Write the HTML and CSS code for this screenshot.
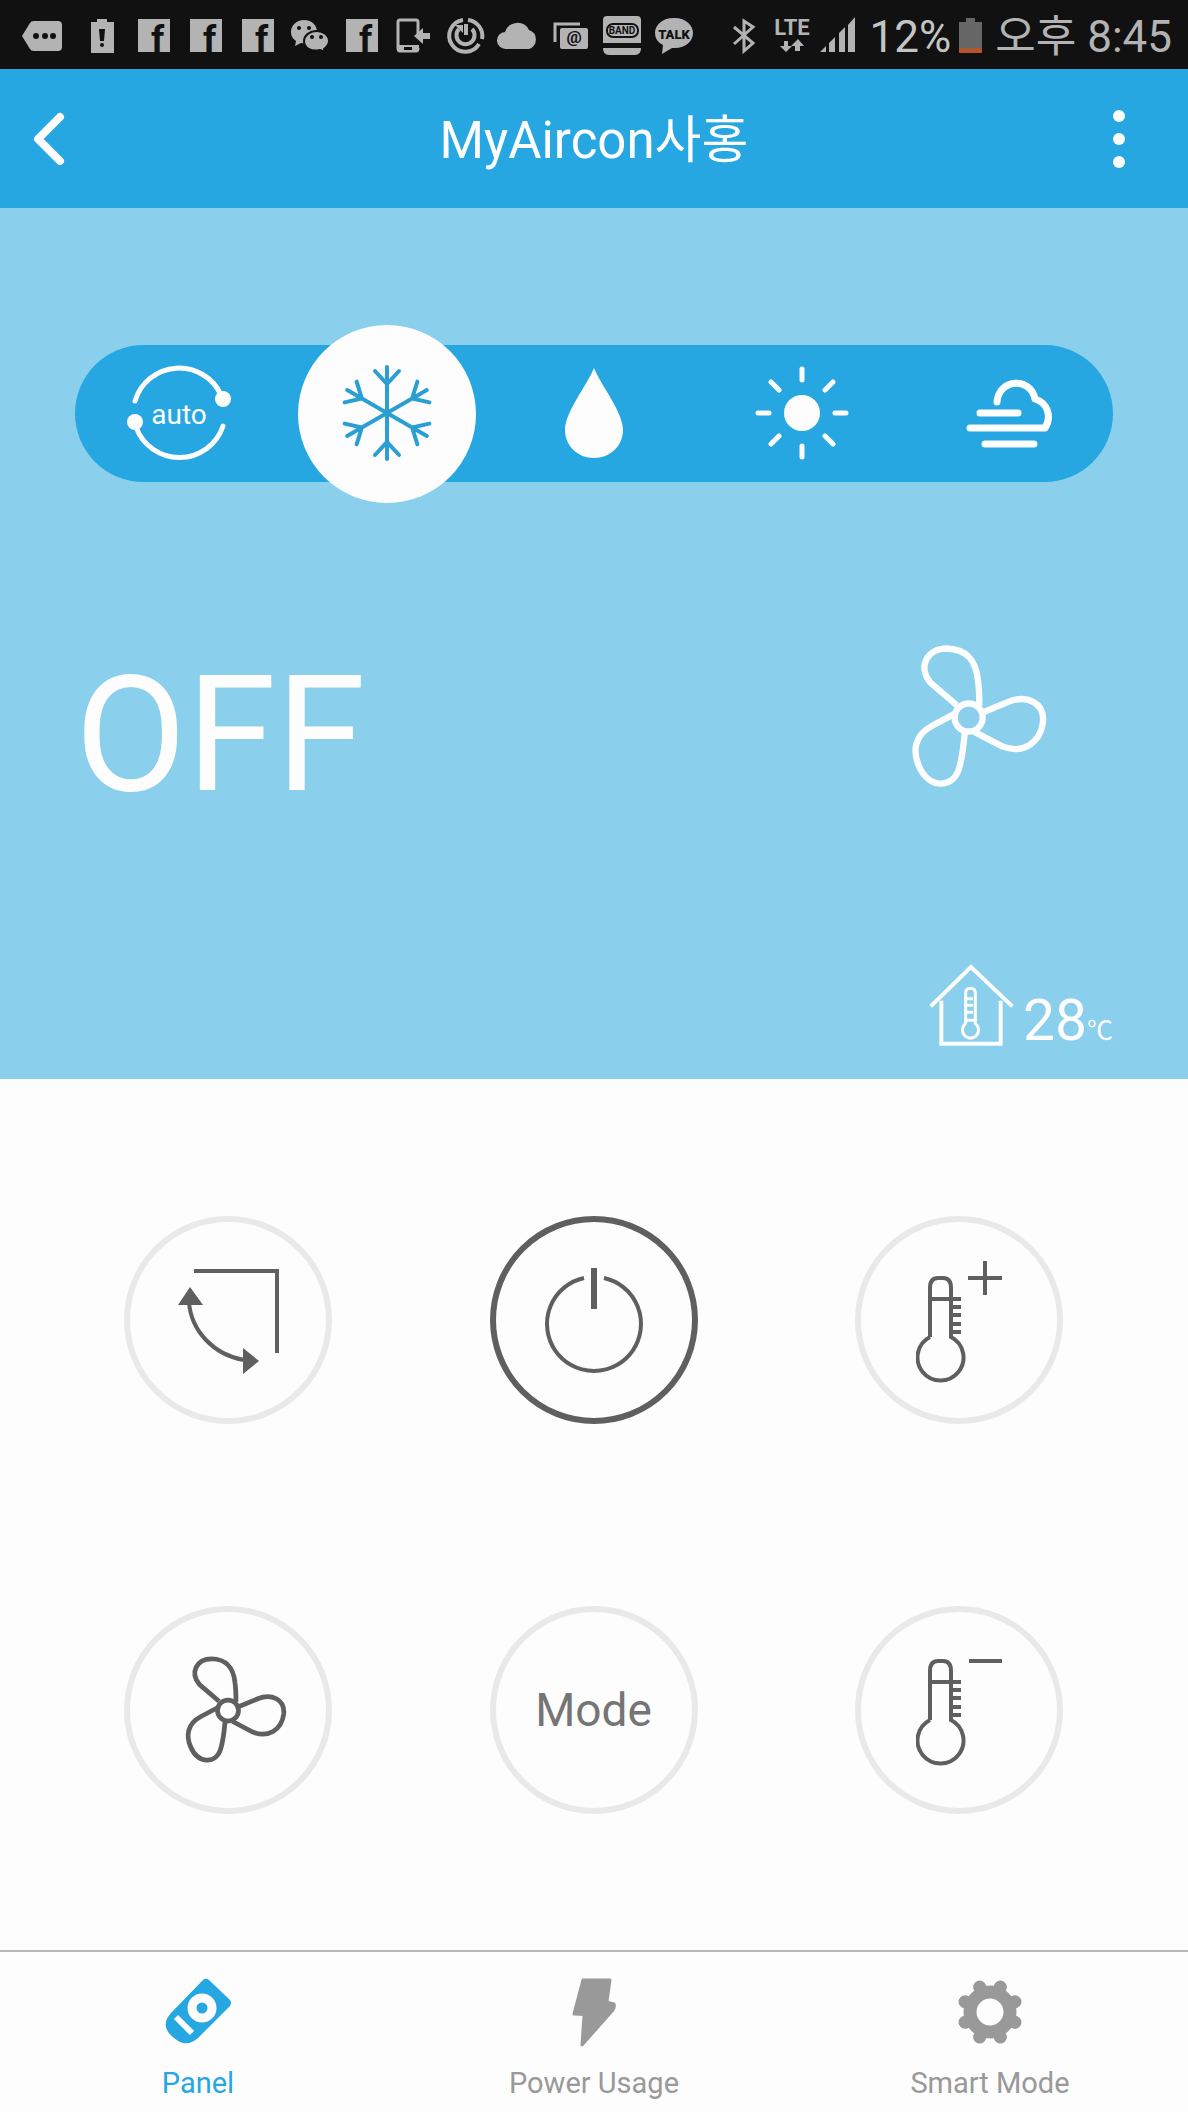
FILE: index.html
```html
<!DOCTYPE html>
<html lang="ko">
<head>
  <meta charset="UTF-8">
  <meta name="viewport" content="width=device-width, initial-scale=1.0">
  <title>MyAircon</title>
  <link rel="stylesheet" href="styles.css">
</head>
<body>

<!-- shared shapes -->
<svg class="defs" aria-hidden="true">
  <symbol id="fan" viewBox="90 65 420 440">
    <g fill="none" stroke="currentColor" stroke-width="19">
      <path d="M230 254 L152 187 C112 140 140 84 200 84 C262 86 288 120 294 180 Q298 210 298 256"/>
      <path d="M308 276 L385 244 C440 222 494 246 489 305 C480 370 425 402 365 377 L283 334"/>
      <path d="M222 281 L158 315 C100 345 99 395 116 435 C145 505 215 505 235 450 C247 415 250 385 254 338"/>
      <circle cx="266" cy="291" r="42"/>
    </g>
  </symbol>
  <symbol id="thermometer" viewBox="0 0 70 120">
    <g fill="none" stroke="currentColor" stroke-width="4">
      <path d="M14 63 V14 Q14 4 22 4 H27 Q35 4 35 14 V63 A23 23 0 1 1 14 63"/>
      <path d="M14 25 H45 M35 33 H45 M35 41 H45 M35 50 H45 M35 58 H45"/>
    </g>
  </symbol>
</svg>

<div class="status-bar">
  <div class="notifications">
    <svg class="wide" viewBox="0 0 76 40">
      <path d="M34 6 H58 Q62 6 62 10 V32 Q62 36 58 36 H34 Q31 36 30 34 L22 21 L30 8 Q31 6 34 6 Z"/>
      <g class="cut"><circle cx="36" cy="21" r="3"/><circle cx="45" cy="21" r="3"/><circle cx="53" cy="21" r="3"/></g>
    </svg>
    <svg viewBox="0 0 52 40">
      <path d="M15 7 H21 V4 H31 V7 H38 V38 H15 Z"/>
      <path class="cut" d="M23 14 H29 L28 26 H24 Z"/><circle class="cut" cx="26" cy="30" r="2"/>
    </svg>
    <svg viewBox="0 0 52 40"><path d="M10 4 H42 V37 H10 Z"/><text class="cut" x="23" y="37" font-size="37" font-weight="700">f</text></svg>
    <svg viewBox="0 0 52 40"><path d="M10 4 H42 V37 H10 Z"/><text class="cut" x="23" y="37" font-size="37" font-weight="700">f</text></svg>
    <svg viewBox="0 0 52 40"><path d="M10 4 H42 V37 H10 Z"/><text class="cut" x="23" y="37" font-size="37" font-weight="700">f</text></svg>
    <svg viewBox="0 0 52 40">
      <path d="M20 5 C12 5 7 11 7 17 Q7 23 12 26 L11 31 L17 28 Q32 30 33 17 C33 10 28 5 20 5 Z"/>
      <path class="gap" d="M33 16 C25 16 20 21 20 26 C20 33 27 37 36 35 L41 37 L40 34 Q45 30 45 26 C45 20 39 16 33 16 Z"/>
      <g class="cut"><circle cx="15" cy="13" r="2"/><circle cx="25" cy="13" r="2"/><circle cx="28" cy="22" r="2"/><circle cx="37" cy="22" r="2"/></g>
    </svg>
    <svg viewBox="0 0 52 40"><path d="M10 4 H42 V37 H10 Z"/><text class="cut" x="23" y="37" font-size="37" font-weight="700">f</text></svg>
    <svg viewBox="0 0 52 40">
      <path class="line" d="M30 19 V7 Q30 5 28 5 H12 Q10 5 10 7 V33 Q10 36 12 36 H28 Q30 36 30 33"/>
      <path d="M10 30 H31 V36 H10 Z M42 18 V24 H35 V29 L26 21 L35 13 V18 Z"/><path class="cut" d="M16 32 H24 V35 H16 Z"/>
    </svg>
    <svg viewBox="0 0 52 40">
      <path class="line thick" d="M23 5 A16 16 0 1 0 39 29 M28 5 A16 16 0 0 1 42 24"/>
      <path class="line thick" d="M19 14 A9 9 0 1 0 32 14 M26 9 V20"/><path d="M15 10 H23 V18 Z"/>
    </svg>
    <svg viewBox="0 0 52 40">
      <path d="M14 34 A8 8 0 0 1 13 17 A13 13 0 0 1 37 15 A10 10 0 0 1 37 34 Z"/>
    </svg>
    <svg viewBox="0 0 52 40">
      <path class="line" d="M11 27 V9 H36"/>
      <rect x="16" y="13" width="28" height="21" rx="2"/>
      <text class="cut" x="30" y="28" text-anchor="middle" font-size="17" font-weight="700">@</text>
    </svg>
    <svg viewBox="0 0 52 40">
      <path d="M7 28 V5 Q7 1 11 1 H41 Q45 1 45 5 V28 Z M7 33 H45 Q45 40 39 40 H13 Q7 40 7 33 Z"/>
      <rect class="cut-line" x="11" y="9" width="31" height="13" rx="6"/>
      <text class="cut" x="26" y="19" text-anchor="middle" font-size="10" font-weight="700">BAND</text>
    </svg>
    <svg viewBox="0 0 52 40">
      <path d="M26 3 C13 3 7 11 7 18 Q7 26 15 30 L14 39 L24 33 C38 34 45 26 45 18 C45 11 39 3 26 3 Z"/>
      <text class="cut" x="26" y="24" text-anchor="middle" font-size="13" font-weight="900">TALK</text>
    </svg>
  </div>
  <div class="system">
    <svg class="bluetooth" viewBox="0 0 24 40"><path class="line" d="M2 12 L21 28 L12 36 V6 L21 12 L2 29"/></svg>
    <svg class="lte" viewBox="0 0 40 40">
      <text x="20" y="20" text-anchor="middle" font-size="22" font-weight="700">LTE</text>
      <path d="M12 26 H16 V31 H20 L14 37 L8 31 H12 Z M23 36 V31 H19 L26 24 L32 31 H28 V36 Z"/>
    </svg>
    <svg class="signal" viewBox="0 0 36 40"><path d="M0 37 L6 31 V37 Z M9 37 V28 L15 22 V37 Z M19 37 V18 L25 12 V37 Z M28 37 V10 L35 2 V37 Z"/></svg>
    <span class="percent">12%</span>
    <svg class="battery" viewBox="0 0 24 40"><path fill="#666" d="M0 7 H7 V3 H16 V7 H23 V33 H0 Z"/><path fill="#b25430" d="M0 33 H23 V38 H0 Z"/></svg>
    <time>오후 8:45</time>
  </div>
</div>

<header class="app-bar">
  <button type="button" class="icon-button" aria-label="Back">
    <svg viewBox="0 0 40 60"><path d="M30 8 L8 30 L30 52" fill="none" stroke="currentColor" stroke-width="8" stroke-linecap="round" stroke-linejoin="round"/></svg>
  </button>
  <h1>MyAircon사홍</h1>
  <button type="button" class="icon-button" aria-label="More options">
    <svg viewBox="0 0 40 60"><g fill="currentColor"><circle cx="19" cy="7" r="6"/><circle cx="19" cy="30" r="6"/><circle cx="19" cy="53" r="6"/></g></svg>
  </button>
</header>

<main>
  <section class="display">
    <div class="modes">
      <button type="button" aria-label="Auto">
        <svg viewBox="-54 -53 108 108">
          <g fill="none" stroke="currentColor" stroke-width="5" stroke-linecap="round">
            <path d="M-44 -12 A46 46 0 0 1 42 -18"/>
            <path d="M44 13 A46 46 0 0 1 -43 14"/>
          </g>
          <circle cx="44" cy="-14" r="8" fill="currentColor"/>
          <circle cx="-44" cy="9" r="8" fill="currentColor"/>
          <text x="0" y="11" text-anchor="middle" font-size="28" fill="currentColor">auto</text>
        </svg>
      </button>
      <button type="button" class="active" aria-label="Cool" aria-pressed="true">
        <svg viewBox="-54 -53 108 108">
          <g fill="none" stroke="currentColor" stroke-width="4" stroke-linecap="round">
            <path id="arm" d="M0 0 V-46 M-12 -42 L0 -29 L12 -42"/>
            <use href="#arm" transform="rotate(60)"/>
            <use href="#arm" transform="rotate(120)"/>
            <use href="#arm" transform="rotate(180)"/>
            <use href="#arm" transform="rotate(240)"/>
            <use href="#arm" transform="rotate(300)"/>
          </g>
        </svg>
      </button>
      <button type="button" aria-label="Dry">
        <svg viewBox="-54 -53 108 108"><path fill="currentColor" d="M0 -45 C8 -26 29 -1 29 17 C29 33 16 45 0 45 C-16 45 -29 33 -29 17 C-29 -1 -8 -26 0 -45 Z"/></svg>
      </button>
      <button type="button" aria-label="Heat">
        <svg viewBox="-54 -53 108 108">
          <circle r="18" fill="currentColor"/>
          <path d="M0 -44 V-33 M0 44 V33 M-44 0 H-33 M44 0 H33 M-31 -31 L-23 -23 M31 -31 L23 -23 M-31 31 L-23 23 M31 31 L23 23" stroke="currentColor" stroke-width="5" stroke-linecap="round"/>
        </svg>
      </button>
      <button type="button" aria-label="Fan only">
        <svg viewBox="-54 -54 108 108">
          <path d="M-12 -12 C-10 -36 22 -37 26 -15 C39 -11 43 3 36 14 H-39 M-29 -1 H9 M-24 30 H25" fill="none" stroke="currentColor" stroke-width="7" stroke-linecap="round" stroke-linejoin="round"/>
        </svg>
      </button>
    </div>

    <div class="state">
      <span class="state-text">OFF</span>
      <svg class="state-fan"><use href="#fan"/></svg>
    </div>

    <div class="indoor">
      <svg viewBox="140 1030 270 255">
        <g fill="none" stroke="currentColor" stroke-width="12">
          <path d="M151 1160 L272 1042 L396 1160"/>
          <path d="M183 1143 V1272 H361 V1143"/>
          <path d="M256 1212 V1120 Q256 1106 270 1106 Q285 1106 285 1120 V1212 A24 24 0 1 1 256 1212 M256 1137 H278 M256 1157 H278 M256 1178 H278 M256 1202 H285" stroke-width="9"/>
        </g>
      </svg>
      <span class="temperature">28<small>℃</small></span>
    </div>
  </section>

  <section class="controls">
    <button type="button" aria-label="Swing">
      <svg viewBox="6 6 196 196">
        <path d="M70 55 H153 V137 M65 86 C67 115 90 139 120 144" fill="none" stroke="currentColor" stroke-width="4"/>
        <path d="M66 71 L79 89 H54 Z M135 145 L119 132 V158 Z" fill="currentColor"/>
      </svg>
    </button>
    <button type="button" class="power" aria-label="Power">
      <svg viewBox="6 6 196 196">
        <path d="M94 62 A47 47 0 1 0 114 62" fill="none" stroke="currentColor" stroke-width="4"/>
        <path d="M104 52 V93" stroke="currentColor" stroke-width="6"/>
      </svg>
    </button>
    <button type="button" aria-label="Temperature up">
      <svg viewBox="6 6 196 196">
        <use href="#thermometer" x="61" y="58" width="70" height="120"/>
        <path d="M113 62 H147 M130 45 V79" stroke="currentColor" stroke-width="4"/>
      </svg>
    </button>
    <button type="button" aria-label="Fan speed">
      <svg viewBox="6 6 196 196"><use href="#fan" x="60" y="48" width="105" height="110"/></svg>
    </button>
    <button type="button">Mode</button>
    <button type="button" aria-label="Temperature down">
      <svg viewBox="6 6 196 196">
        <use href="#thermometer" x="61" y="51" width="70" height="120"/>
        <path d="M114 55 H147" stroke="currentColor" stroke-width="4"/>
      </svg>
    </button>
  </section>
</main>

<nav class="tabs">
  <a href="#panel" class="current" aria-current="page">
    <svg viewBox="0 0 72 72">
      <path fill="currentColor" d="M41 4 Q44 1 47 4 L68 24 Q70 27 68 30 L36 62 C28 69 20 69 12 62 C2 54 1 46 9 37 Z"/>
      <circle cx="40" cy="32" r="10" fill="none" stroke="#fdfdfd" stroke-width="9"/>
      <path d="M14 41 L30 57" stroke="#fdfdfd" stroke-width="6"/>
    </svg>
    Panel
  </a>
  <a href="#power">
    <svg viewBox="0 0 72 72"><path fill="currentColor" stroke="currentColor" stroke-width="3" stroke-linejoin="round" d="M25 4 H52 L49 25 Q50 27 56 28 Q57 31 55 34 L24 69 L26 39 Q24 38 16 38 Z"/></svg>
    Power Usage
  </a>
  <a href="#smart">
    <svg viewBox="-36 -36 72 72">
      <g fill="none" stroke="currentColor">
        <circle r="20" stroke-width="13"/>
        <path id="teeth" d="M0 -27 V-22 M0 27 V22 M-27 0 H-22 M27 0 H22" stroke-width="13" stroke-linecap="round" transform="rotate(22.5)"/>
        <use href="#teeth" transform="rotate(45)"/>
      </g>
    </svg>
    Smart Mode
  </a>
</nav>

</body>
</html>
```
FILE: styles.css
```css
:root {
  --blue: #26a7e1;
  --sky: #8acfec;
  --white: #fdfdfd;
  --dark: #5f5f5f;
  --ring: #e9e9e9;
  --grey: #999999;
  --status: #111111;
  --status-icon: #b3b3b3;
}

* {
  margin: 0;
  padding: 0;
  box-sizing: border-box;
}

body {
  display: flex;
  flex-direction: column;
  min-height: 100vh;
  font-family: Roboto, "Noto Sans CJK KR", sans-serif;
  background: var(--white);
  color: var(--dark);
}

button {
  border: none;
  background: none;
  color: inherit;
  font-family: inherit;
  cursor: pointer;
}

svg {
  display: block;
  flex-shrink: 0;
}

.defs {
  position: absolute;
  width: 0;
  height: 0;
}

/* Status bar */
.status-bar {
  display: flex;
  justify-content: space-between;
  align-items: center;
  height: 69px;
  padding-right: 16px;
  background: var(--status);
  color: var(--status-icon);
}

.notifications,
.system {
  display: flex;
  align-items: center;
}

.notifications svg {
  width: 52px;
  height: 40px;
  overflow: visible;
  fill: currentColor;
}

.notifications .wide {
  width: 76px;
}

.system svg {
  height: 40px;
  fill: currentColor;
}

.status-bar .cut {
  fill: var(--status);
}

.status-bar .cut-line {
  fill: none;
  stroke: var(--status);
  stroke-width: 2;
}

.status-bar .gap {
  stroke: var(--status);
  stroke-width: 2;
}

.status-bar .line {
  fill: none;
  stroke: currentColor;
  stroke-width: 3;
}

.status-bar .thick {
  stroke-width: 4;
}

.bluetooth {
  width: 24px;
  margin-right: 16px;
}

.lte {
  width: 40px;
  margin-right: 8px;
}

.signal {
  width: 36px;
}

.battery {
  width: 24px;
}

.percent,
time {
  padding-top: 4px;
  font-size: 44px;
  line-height: 52px;
  white-space: nowrap;
}

.percent {
  margin: 0 8px 0 14px;
  color: #c4c4c4;
}

time {
  margin-left: 12px;
}

/* App bar */
.app-bar {
  display: flex;
  justify-content: space-between;
  align-items: center;
  height: 139px;
  padding: 0 30px;
  background: var(--blue);
  color: var(--white);
}

.app-bar h1 {
  padding-top: 4px;
  font-size: 51px;
  font-weight: 400;
  line-height: 60px;
}

.icon-button svg {
  width: 40px;
  height: 60px;
}

.icon-button:last-child {
  margin-right: 18px;
}

.icon-button:first-child {
  margin-right: 18px;
}

/* Current state */
.display {
  padding: 137px 75px 31px;
  background: var(--sky);
  color: var(--white);
}

.modes {
  display: flex;
  align-items: center;
  height: 137px;
  border-radius: 69px;
  background: var(--blue);
}

.modes button {
  display: flex;
  flex: 1;
  justify-content: center;
}

.modes svg {
  width: 108px;
  height: 108px;
}

.modes .active {
  flex: 0 0 178px;
  align-items: center;
  height: 178px;
  margin: 0 15px;
  border-radius: 50%;
  background: var(--white);
  color: #2b9fd2;
}

.state {
  display: flex;
  justify-content: space-between;
  align-items: flex-start;
  margin-top: 160px;
  padding-right: 63px;
}

.state-text {
  font-size: 162px;
  line-height: 186px;
}

.state-fan {
  width: 140px;
  height: 147px;
}

.indoor {
  display: flex;
  justify-content: flex-end;
  align-items: flex-end;
  gap: 6px;
  margin-top: 135px;
}

.indoor svg {
  width: 90px;
  height: 85px;
}

.temperature {
  font-size: 57px;
  line-height: 54px;
}

.temperature small {
  font-size: 26px;
  line-height: 26px;
}

/* Remote buttons */
.controls {
  display: grid;
  grid-template-columns: repeat(3, 208px);
  justify-content: space-between;
  row-gap: 182px;
  padding: 137px 125px 136px 124px;
}

.controls button {
  height: 208px;
  border: 6px solid var(--ring);
  border-radius: 50%;
  font-size: 46px;
  color: #757575;
}

.controls svg {
  width: 100%;
  height: 100%;
  color: var(--dark);
}

.controls .power {
  border-color: var(--dark);
}

/* Bottom tabs */
.tabs {
  display: grid;
  grid-template-columns: repeat(3, 1fr);
  margin-top: auto;
  border-top: 2px solid #b8b8b8;
}

.tabs a {
  display: flex;
  flex-direction: column;
  align-items: center;
  gap: 18px;
  padding: 24px 0 12px;
  color: var(--grey);
  font-size: 29px;
  line-height: 34px;
  text-decoration: none;
}

.tabs svg {
  width: 72px;
  height: 72px;
}

.tabs .current {
  color: var(--blue);
}
```
